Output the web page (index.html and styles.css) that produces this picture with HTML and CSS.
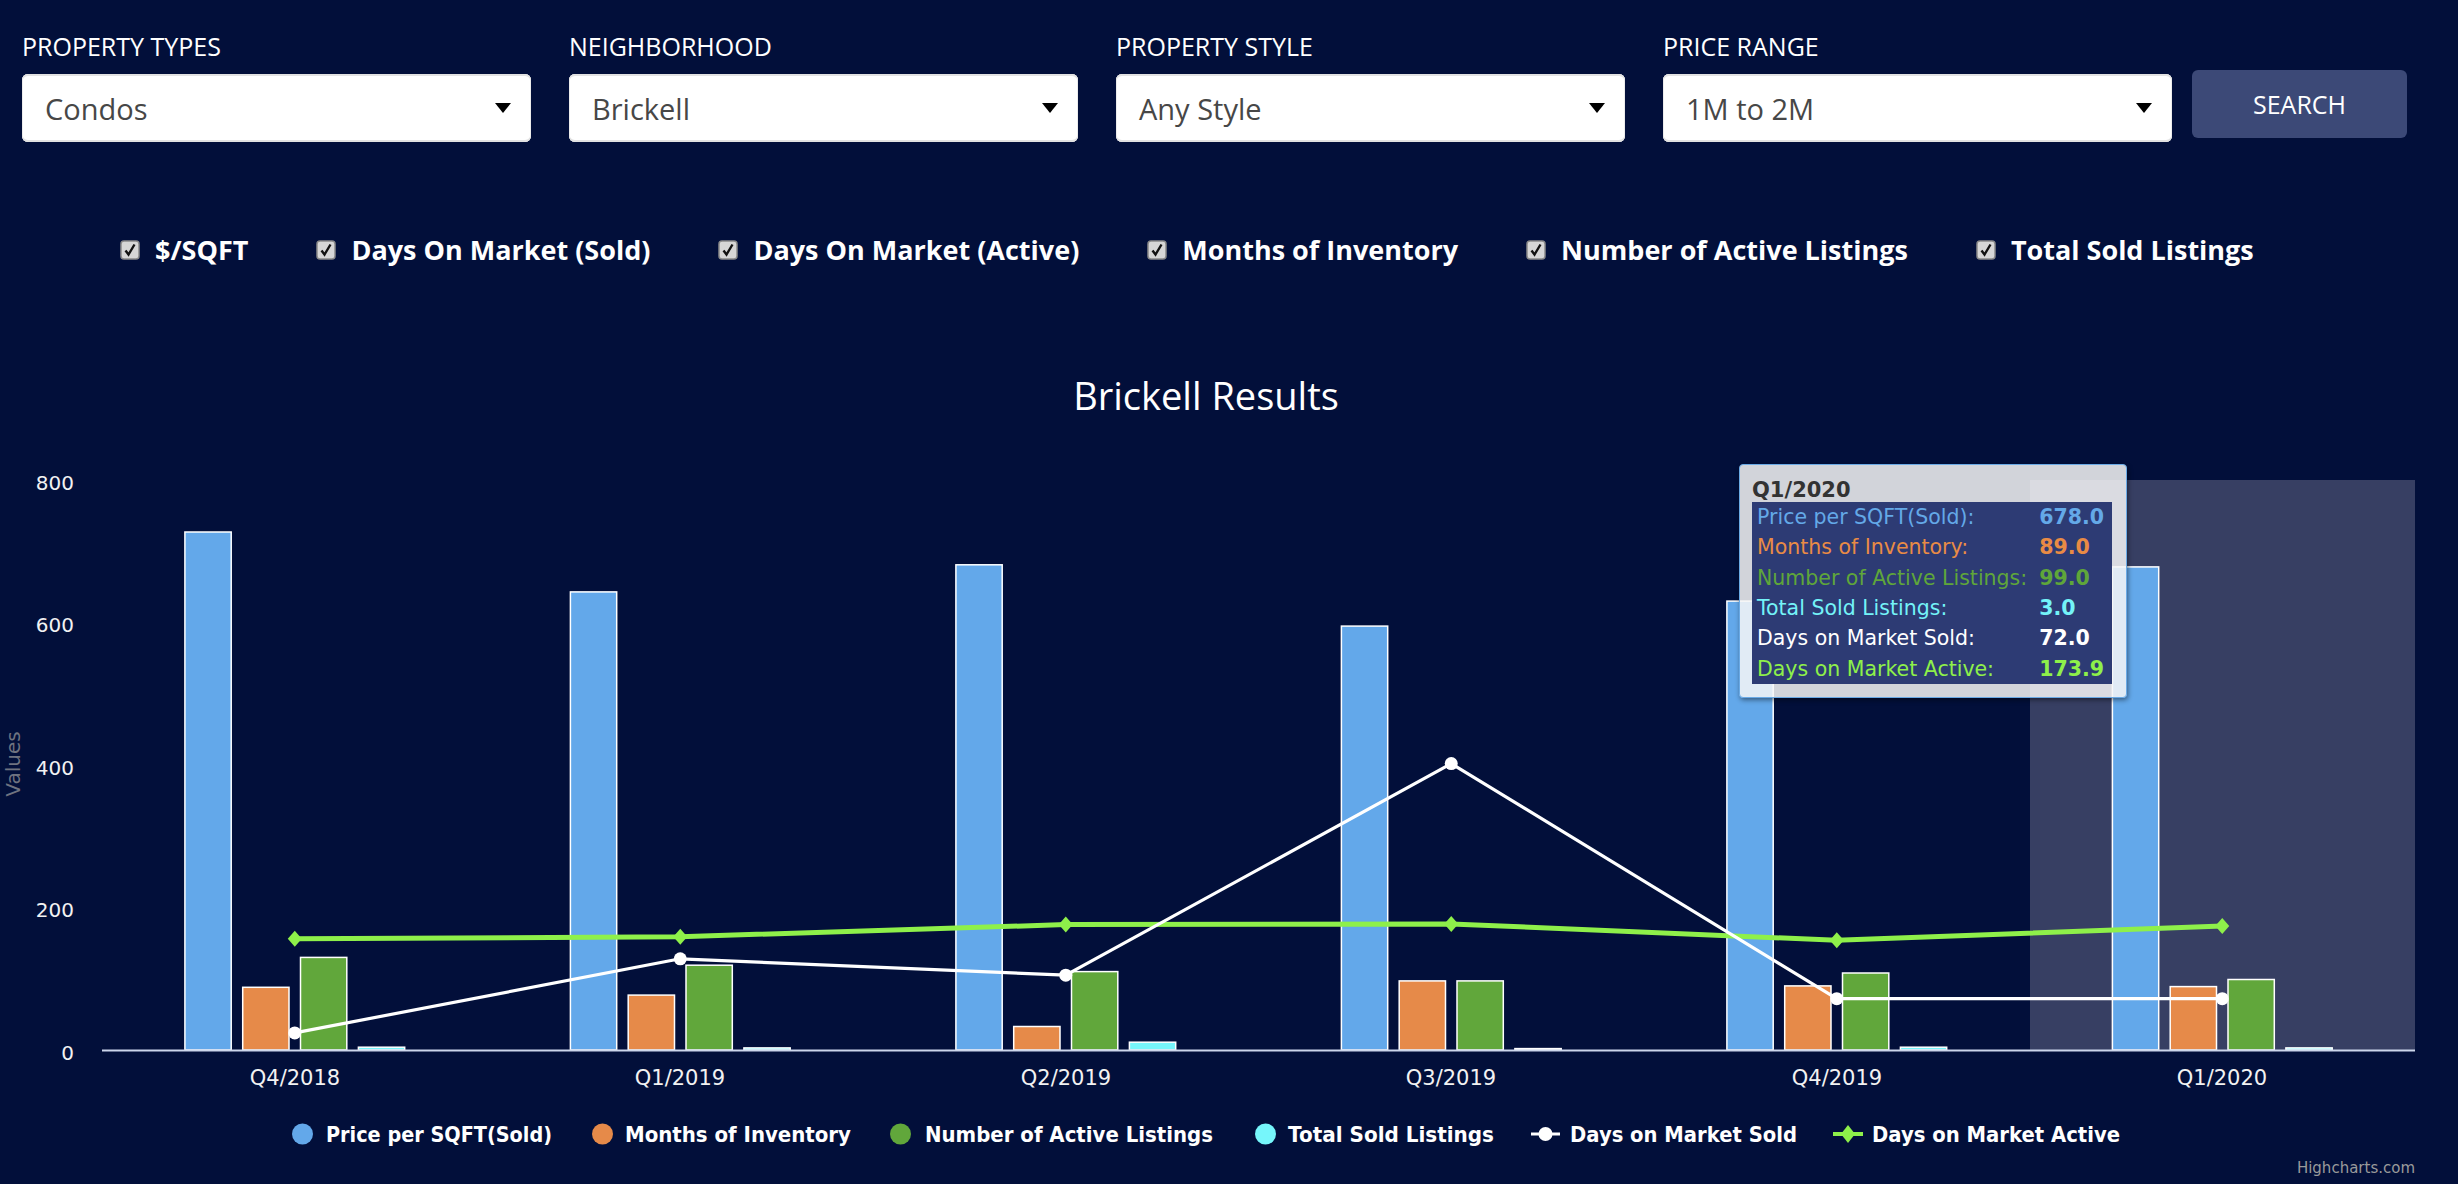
FILE: index.html
```html
<!DOCTYPE html>
<html lang="en">
<head>
<meta charset="utf-8">
<title>Brickell Results</title>
<link rel="stylesheet" href="styles.css">
</head>
<body>
<header class="top">
  <div class="filters">
    <div class="field">
      <span class="field-label">PROPERTY TYPES</span>
      <div class="select"><span class="select-value">Condos</span><i class="caret"></i></div>
    </div>
    <div class="field">
      <span class="field-label">NEIGHBORHOOD</span>
      <div class="select"><span class="select-value">Brickell</span><i class="caret"></i></div>
    </div>
    <div class="field">
      <span class="field-label">PROPERTY STYLE</span>
      <div class="select"><span class="select-value">Any Style</span><i class="caret"></i></div>
    </div>
    <div class="field field-last">
      <span class="field-label">PRICE RANGE</span>
      <div class="select"><span class="select-value">1M to 2M</span><i class="caret"></i></div>
    </div>
    <button class="search" type="button">SEARCH</button>
  </div>
  <div class="checks">
    <label class="check"><svg class="box" viewBox="0 0 20 20"><rect x="1" y="1" width="18" height="18" rx="3" fill="#d6d6d6" stroke="#8a8a8a" stroke-width="1.5"/><path d="M5.5 10.5 L8.5 14.5 L14.5 4.5" fill="none" stroke="#111" stroke-width="2.4"/></svg><span>$/SQFT</span></label>
    <label class="check"><svg class="box" viewBox="0 0 20 20"><rect x="1" y="1" width="18" height="18" rx="3" fill="#d6d6d6" stroke="#8a8a8a" stroke-width="1.5"/><path d="M5.5 10.5 L8.5 14.5 L14.5 4.5" fill="none" stroke="#111" stroke-width="2.4"/></svg><span>Days On Market (Sold)</span></label>
    <label class="check"><svg class="box" viewBox="0 0 20 20"><rect x="1" y="1" width="18" height="18" rx="3" fill="#d6d6d6" stroke="#8a8a8a" stroke-width="1.5"/><path d="M5.5 10.5 L8.5 14.5 L14.5 4.5" fill="none" stroke="#111" stroke-width="2.4"/></svg><span>Days On Market (Active)</span></label>
    <label class="check"><svg class="box" viewBox="0 0 20 20"><rect x="1" y="1" width="18" height="18" rx="3" fill="#d6d6d6" stroke="#8a8a8a" stroke-width="1.5"/><path d="M5.5 10.5 L8.5 14.5 L14.5 4.5" fill="none" stroke="#111" stroke-width="2.4"/></svg><span>Months of Inventory</span></label>
    <label class="check"><svg class="box" viewBox="0 0 20 20"><rect x="1" y="1" width="18" height="18" rx="3" fill="#d6d6d6" stroke="#8a8a8a" stroke-width="1.5"/><path d="M5.5 10.5 L8.5 14.5 L14.5 4.5" fill="none" stroke="#111" stroke-width="2.4"/></svg><span>Number of Active Listings</span></label>
    <label class="check"><svg class="box" viewBox="0 0 20 20"><rect x="1" y="1" width="18" height="18" rx="3" fill="#d6d6d6" stroke="#8a8a8a" stroke-width="1.5"/><path d="M5.5 10.5 L8.5 14.5 L14.5 4.5" fill="none" stroke="#111" stroke-width="2.4"/></svg><span>Total Sold Listings</span></label>
  </div>
</header>

<section class="chart">
  <svg class="chart-svg" width="2458" height="884" viewBox="0 300 2458 884">
    <text class="c-title" x="1206" y="410" text-anchor="middle">Brickell Results</text>

    <!-- hover band -->
    <rect x="2030" y="480" width="385" height="570" fill="#373f63"/>

    <!-- y axis -->
    <text class="c-ylab" x="74" y="490" text-anchor="end">800</text>
    <text class="c-ylab" x="74" y="632" text-anchor="end">600</text>
    <text class="c-ylab" x="74" y="775" text-anchor="end">400</text>
    <text class="c-ylab" x="74" y="917" text-anchor="end">200</text>
    <text class="c-ylab" x="74" y="1060" text-anchor="end">0</text>
    <text class="c-ytitle" x="20" y="764" text-anchor="middle" transform="rotate(-90 20 764)">Values</text>

    <!-- bars -->
    <g stroke="#ffffff" stroke-width="1.5">
      <g fill="#63a8ea">
        <rect x="184.9" y="532.0" width="46.3" height="518.0"/>
        <rect x="570.4" y="591.9" width="46.3" height="458.1"/>
        <rect x="955.9" y="564.8" width="46.3" height="485.2"/>
        <rect x="1341.4" y="626.1" width="46.3" height="423.9"/>
        <rect x="1726.9" y="601.1" width="46.3" height="448.9"/>
        <rect x="2112.4" y="566.9" width="46.3" height="483.1"/>
      </g>
      <g fill="#e68a49">
        <rect x="242.7" y="987.3" width="46.3" height="62.7"/>
        <rect x="628.2" y="995.1" width="46.3" height="54.9"/>
        <rect x="1013.7" y="1026.5" width="46.3" height="23.5"/>
        <rect x="1399.2" y="980.9" width="46.3" height="69.1"/>
        <rect x="1784.7" y="985.9" width="46.3" height="64.1"/>
        <rect x="2170.2" y="986.6" width="46.3" height="63.4"/>
      </g>
      <g fill="#61a73b">
        <rect x="300.5" y="957.4" width="46.3" height="92.6"/>
        <rect x="686.0" y="965.2" width="46.3" height="84.8"/>
        <rect x="1071.5" y="971.6" width="46.3" height="78.4"/>
        <rect x="1457.0" y="980.9" width="46.3" height="69.1"/>
        <rect x="1842.5" y="973.0" width="46.3" height="77.0"/>
        <rect x="2228.0" y="979.5" width="46.3" height="70.5"/>
      </g>
      <g fill="#76f6fb">
        <rect x="358.4" y="1047.2" width="46.3" height="2.8"/>
        <rect x="743.9" y="1047.9" width="46.3" height="2.1"/>
        <rect x="1129.4" y="1042.2" width="46.3" height="7.8"/>
        <rect x="1514.9" y="1048.6" width="46.3" height="1.4"/>
        <rect x="1900.4" y="1047.2" width="46.3" height="2.8"/>
        <rect x="2285.9" y="1047.9" width="46.3" height="2.1"/>
      </g>
    </g>

    <!-- x axis -->
    <line x1="102" y1="1050.5" x2="2415" y2="1050.5" stroke="#ccd6eb" stroke-width="2"/>
    <text class="c-xlab" x="295" y="1085" text-anchor="middle">Q4/2018</text>
    <text class="c-xlab" x="680" y="1085" text-anchor="middle">Q1/2019</text>
    <text class="c-xlab" x="1066" y="1085" text-anchor="middle">Q2/2019</text>
    <text class="c-xlab" x="1451" y="1085" text-anchor="middle">Q3/2019</text>
    <text class="c-xlab" x="1837" y="1085" text-anchor="middle">Q4/2019</text>
    <text class="c-xlab" x="2222" y="1085" text-anchor="middle">Q1/2020</text>

    <!-- Days on Market Active -->
    <polyline points="294.75,938.8 680.25,936.7 1065.75,924.6 1451.25,923.9 1836.75,940.3 2222.25,926.1" fill="none" stroke="#8ef04a" stroke-width="5" stroke-linejoin="round"/>
    <g fill="#8ef04a">
      <path d="M294.75 930.8 L301.75 938.8 L294.75 946.8 L287.75 938.8 Z"/>
      <path d="M680.25 928.7 L687.25 936.7 L680.25 944.7 L673.25 936.7 Z"/>
      <path d="M1065.75 916.6 L1072.75 924.6 L1065.75 932.6 L1058.75 924.6 Z"/>
      <path d="M1451.25 915.9 L1458.25 923.9 L1451.25 931.9 L1444.25 923.9 Z"/>
      <path d="M1836.75 932.3 L1843.75 940.3 L1836.75 948.3 L1829.75 940.3 Z"/>
      <path d="M2222.25 918.1 L2229.25 926.1 L2222.25 934.1 L2215.25 926.1 Z"/>
    </g>

    <!-- Days on Market Sold -->
    <polyline points="294.75,1032.9 680.25,958.8 1065.75,975.2 1451.25,763.6 1836.75,998.7 2222.25,998.7" fill="none" stroke="#ffffff" stroke-width="3.2" stroke-linejoin="round"/>
    <g fill="#ffffff">
      <circle cx="294.75" cy="1032.9" r="6.5"/>
      <circle cx="680.25" cy="958.8" r="6.5"/>
      <circle cx="1065.75" cy="975.2" r="6.5"/>
      <circle cx="1451.25" cy="763.6" r="6.5"/>
      <circle cx="1836.75" cy="998.7" r="6.5"/>
      <circle cx="2222.25" cy="998.7" r="6.5"/>
    </g>

    <!-- legend -->
    <circle cx="302.5" cy="1134" r="10.5" fill="#63a8ea"/>
    <text class="c-legend" x="326" y="1142" textLength="226" lengthAdjust="spacingAndGlyphs">Price per SQFT(Sold)</text>
    <circle cx="602.5" cy="1134" r="10.5" fill="#e68a49"/>
    <text class="c-legend" x="625" y="1142" textLength="226" lengthAdjust="spacingAndGlyphs">Months of Inventory</text>
    <circle cx="900.5" cy="1134" r="10.5" fill="#61a73b"/>
    <text class="c-legend" x="925" y="1142" textLength="288" lengthAdjust="spacingAndGlyphs">Number of Active Listings</text>
    <circle cx="1265.5" cy="1134" r="10.5" fill="#76f6fb"/>
    <text class="c-legend" x="1288" y="1142" textLength="206" lengthAdjust="spacingAndGlyphs">Total Sold Listings</text>
    <line x1="1531" y1="1134" x2="1560" y2="1134" stroke="#ffffff" stroke-width="3"/>
    <circle cx="1545.5" cy="1134" r="7" fill="#ffffff"/>
    <text class="c-legend" x="1570" y="1142" textLength="227" lengthAdjust="spacingAndGlyphs">Days on Market Sold</text>
    <line x1="1833" y1="1134" x2="1863" y2="1134" stroke="#8ef04a" stroke-width="4"/>
    <path d="M1848 1125 L1855 1134 L1848 1143 L1841 1134 Z" fill="#8ef04a"/>
    <text class="c-legend" x="1872" y="1142" textLength="248" lengthAdjust="spacingAndGlyphs">Days on Market Active</text>

    <text class="c-credit" x="2415" y="1173" text-anchor="end">Highcharts.com</text>
  </svg>

  <div class="tooltip">
    <div class="tt-head">Q1/2020</div>
    <table class="tt-table">
      <tr class="tt-blue"><td class="tt-name">Price per SQFT(Sold):</td><td class="tt-val">678.0</td></tr>
      <tr class="tt-orange"><td class="tt-name">Months of Inventory:</td><td class="tt-val">89.0</td></tr>
      <tr class="tt-green"><td class="tt-name">Number of Active Listings:</td><td class="tt-val">99.0</td></tr>
      <tr class="tt-cyan"><td class="tt-name">Total Sold Listings:</td><td class="tt-val">3.0</td></tr>
      <tr class="tt-white"><td class="tt-name">Days on Market Sold:</td><td class="tt-val">72.0</td></tr>
      <tr class="tt-lime"><td class="tt-name">Days on Market Active:</td><td class="tt-val">173.9</td></tr>
    </table>
  </div>
</section>
</body>
</html>
```

FILE: styles.css
```css
* {
  box-sizing: border-box;
}

html, body {
  margin: 0;
  padding: 0;
  background: #020f3a;
}

body {
  width: 2458px;
  height: 1184px;
  overflow: hidden;
  font-family: "Open Sans", "Liberation Sans", sans-serif;
  color: #ffffff;
}

/* ---------- filters ---------- */
.top {
  height: 300px;
}

.filters {
  display: flex;
  align-items: flex-end;
  padding: 28px 0 0 22px;
}

.field {
  width: 509px;
  margin-right: 38px;
}

.field-last {
  margin-right: 20px;
}

.field-label {
  display: block;
  font-size: 25px;
  line-height: 36px;
  color: #ffffff;
}

.select {
  margin-top: 10px;
  height: 68px;
  background: #ffffff;
  border-radius: 6px;
  display: flex;
  align-items: center;
  justify-content: space-between;
  padding: 0 20px 0 23px;
  box-shadow: inset 0 2px 0 #e2e2e2, inset 0 -2px 0 #e2e2e2, inset 1px 0 0 #ececec, inset -1px 0 0 #ececec;
}

.select-value {
  font-size: 29px;
  color: #474747;
}

.caret {
  display: block;
  width: 0;
  height: 0;
  border-left: 8px solid transparent;
  border-right: 8px solid transparent;
  border-top: 10px solid #000000;
}

.search {
  width: 215px;
  height: 68px;
  margin-bottom: 4px;
  background: #3c4977;
  border: 0;
  border-radius: 6px;
  color: #ffffff;
  font-family: "Open Sans", "Liberation Sans", sans-serif;
  font-size: 25px;
  padding: 0;
}

/* ---------- checkboxes ---------- */
.checks {
  display: flex;
  align-items: center;
  height: 36px;
  margin-top: 90px;
  padding-left: 120px;
}

.check {
  display: flex;
  align-items: center;
  margin-right: 68px;
  font-size: 27px;
  font-weight: 700;
  line-height: 36px;
  color: #ffffff;
}

.box {
  display: block;
  width: 20px;
  height: 20px;
  margin-right: 15px;
}

/* ---------- chart ---------- */
.chart {
  position: relative;
  height: 884px;
}

.chart-svg {
  display: block;
}

.c-title {
  font-family: "Open Sans", sans-serif;
  font-size: 38px;
  fill: #ffffff;
}

.c-ylab {
  font-family: "DejaVu Sans", sans-serif;
  font-size: 20px;
  fill: #f2f2f2;
}

.c-xlab {
  font-family: "DejaVu Sans", sans-serif;
  font-size: 21px;
  fill: #f2f2f2;
}

.c-ytitle {
  font-family: "DejaVu Sans", sans-serif;
  font-size: 20px;
  fill: #6f7380;
}

.c-legend {
  font-family: "DejaVu Sans", sans-serif;
  font-size: 21px;
  font-weight: 700;
  fill: #ffffff;
}

.c-credit {
  font-family: "DejaVu Sans", sans-serif;
  font-size: 15px;
  fill: #9a9a9a;
}

/* ---------- tooltip ---------- */
.tooltip {
  position: absolute;
  left: 1739px;
  top: 164px;
  width: 388px;
  height: 234px;
  padding: 14px 14px 0 12px;
  background: rgba(247, 247, 247, 0.85);
  border: 1.5px solid #6aaae6;
  border-radius: 4px;
  box-shadow: 1px 2px 5px rgba(0, 0, 0, 0.45);
  font-family: "DejaVu Sans", sans-serif;
  font-size: 20.5px;
}

.tt-head {
  color: #333333;
  font-size: 21px;
  font-weight: 700;
  line-height: 23px;
  height: 23px;
}

.tt-table {
  width: 360px;
  border-collapse: collapse;
  background: #2d3b74;
}

.tt-table td {
  padding: 0;
  height: 30.3px;
  line-height: 30px;
  white-space: nowrap;
}

.tt-name {
  padding-left: 5px !important;
}

.tt-val {
  width: 68px;
  padding-right: 8px !important;
  font-weight: 700;
}

.tt-blue { color: #64a9e8; }
.tt-orange { color: #e98b45; }
.tt-green { color: #5fa63a; }
.tt-cyan { color: #74f3f8; }
.tt-white { color: #ffffff; }
.tt-lime { color: #8ef04a; }
```
